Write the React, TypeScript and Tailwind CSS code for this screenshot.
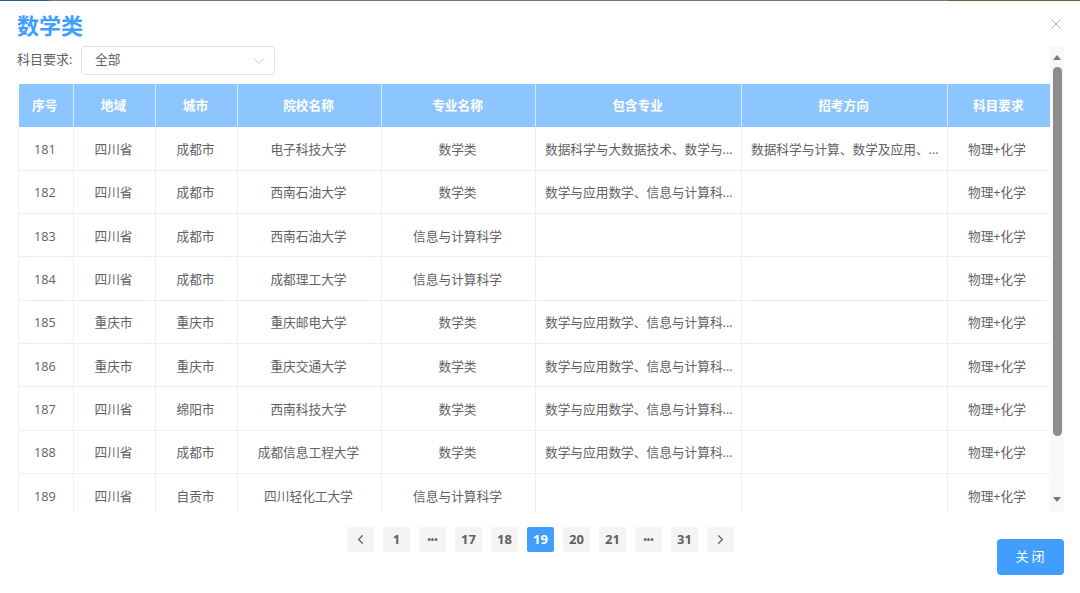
import { ChevronDown, ChevronLeft, ChevronRight, X } from "lucide-react";

const font = "font-['Open_Sans','Noto_Sans_CJK_SC',sans-serif]";

const columns = [
  { title: "序号", width: "w-[55px]" },
  { title: "地域", width: "w-[82px]" },
  { title: "城市", width: "w-[82px]" },
  { title: "院校名称", width: "w-[144px]" },
  { title: "专业名称", width: "w-[154px]" },
  { title: "包含专业", width: "w-[206px]" },
  { title: "招考方向", width: "w-[206px]" },
  { title: "科目要求", width: "w-[103px]" },
];

const mathMajors = "数学与应用数学、信息与计算科...";

const rows = [
  ["181", "四川省", "成都市", "电子科技大学", "数学类", "数据科学与大数据技术、数学与...", "数据科学与计算、数学及应用、..."],
  ["182", "四川省", "成都市", "西南石油大学", "数学类", mathMajors, ""],
  ["183", "四川省", "成都市", "西南石油大学", "信息与计算科学", "", ""],
  ["184", "四川省", "成都市", "成都理工大学", "信息与计算科学", "", ""],
  ["185", "重庆市", "重庆市", "重庆邮电大学", "数学类", mathMajors, ""],
  ["186", "重庆市", "重庆市", "重庆交通大学", "数学类", mathMajors, ""],
  ["187", "四川省", "绵阳市", "西南科技大学", "数学类", mathMajors, ""],
  ["188", "四川省", "成都市", "成都信息工程大学", "数学类", mathMajors, ""],
  ["189", "四川省", "自贡市", "四川轻化工大学", "信息与计算科学", "", ""],
];

const pages = ["1", "...", "17", "18", "19", "20", "21", "...", "31"];

export default function App() {
  return (
    <div className={`w-[1080px] h-[593px] overflow-hidden bg-white text-[12.7px] text-[#606266] ${font}`}>
      <div className="flex h-[1px]">
        <div className="w-[49px] bg-[#2f5d8a]" />
        <div className="w-[899px] bg-[#777777]" />
        <div className="flex-1 bg-[#7a5a3c]" />
      </div>

      <div className="flex items-center justify-between h-[45px] pl-[17px] pr-[15px]">
        <h2 className="pt-[2px] text-[22px] leading-[30px] font-bold text-[#409eff]">数学类</h2>
        <X className="w-[18px] h-[18px] text-[#909399]" strokeWidth={1} />
      </div>

      <div className="flex h-[466px]">
        <div className="w-[1050px] overflow-hidden">
          <div className="flex items-center h-[29px] pl-[17px]">
            <span className="w-[64px] pb-[1px] text-[13px]">科目要求:</span>
            <div className="flex items-center justify-between w-[194px] h-[29px] pl-[13px] pr-[5px] border border-[#dcdfe6] rounded-[4px]">
              <span className="pb-[1px]">全部</span>
              <ChevronDown className="w-[20px] h-[20px] text-[#c0c4cc]" strokeWidth={1} />
            </div>
          </div>

          <table className="table-fixed w-[1032px] ml-[18px] mt-[9px] border-collapse">
            <thead>
              <tr className="h-[43px] bg-[#8cc5ff]">
                {columns.map((col) => (
                  <th key={col.title} className={`${col.width} pr-[2px] text-center font-bold text-white border-r border-[#d4e8ff] last:border-r-0`}>
                    {col.title}
                  </th>
                ))}
              </tr>
            </thead>
            <tbody>
              {rows.map((row) => (
                <tr key={row[0]} className="h-[43.3px] border-b border-[#ebeef5]">
                  {row.map((cell, i) => (
                    <td
                      key={i}
                      className={`pt-[2px] border-l border-[#ebeef5] ${
                        i === 5 || i === 6 ? "px-[9px] text-left whitespace-nowrap" : "pr-[2px] text-center"
                      }`}
                    >
                      {cell}
                    </td>
                  ))}
                  <td className="pt-[2px] pr-[4px] border-x border-[#ebeef5] text-center">物理+化学</td>
                </tr>
              ))}
            </tbody>
          </table>
        </div>

        <div className="flex flex-col items-center w-[14px] h-[466px] bg-[#f8f8f8] pt-[9px] pb-[10px]">
          <div className="w-0 h-0 mb-[7px] border-x-[4px] border-x-transparent border-b-[5px] border-b-[#777777]" />
          <div className="w-[9px] h-[369px] rounded-full bg-[#8c8c8c]" />
          <div className="w-0 h-0 mt-auto border-x-[4px] border-x-transparent border-t-[5px] border-t-[#777777]" />
        </div>
      </div>

      <div className="flex pl-[347px] pr-[16px]">
        <div className="flex gap-[9px] mt-[15px] h-[25px]">
          <button className="flex items-center justify-center w-[27px] h-[25px] rounded-[2px] bg-[#f4f4f5] text-[#606266]">
            <ChevronLeft className="w-[15px] h-[15px]" strokeWidth={2} />
          </button>
          {pages.map((page, i) =>
            page === "19" ? (
              <button key={i} className="w-[27px] h-[25px] rounded-[2px] bg-[#409eff] text-white font-bold text-[13px]">
                {page}
              </button>
            ) : page === "..." ? (
              <button key={i} className="w-[27px] h-[25px] rounded-[2px] bg-[#f4f4f5] text-[#606266] font-bold text-[9px]">
                •••
              </button>
            ) : (
              <button key={i} className="w-[27px] h-[25px] rounded-[2px] bg-[#f4f4f5] text-[#606266] font-bold text-[13px]">
                {page}
              </button>
            ),
          )}
          <button className="flex items-center justify-center w-[27px] h-[25px] rounded-[2px] bg-[#f4f4f5] text-[#606266]">
            <ChevronRight className="w-[15px] h-[15px]" strokeWidth={2} />
          </button>
        </div>
        <button className="ml-auto mt-[27px] w-[67px] h-[36px] pl-[2px] rounded-[4px] bg-[#409eff] text-white text-[13px] tracking-[3px]">
          关闭
        </button>
      </div>
    </div>
  );
}
